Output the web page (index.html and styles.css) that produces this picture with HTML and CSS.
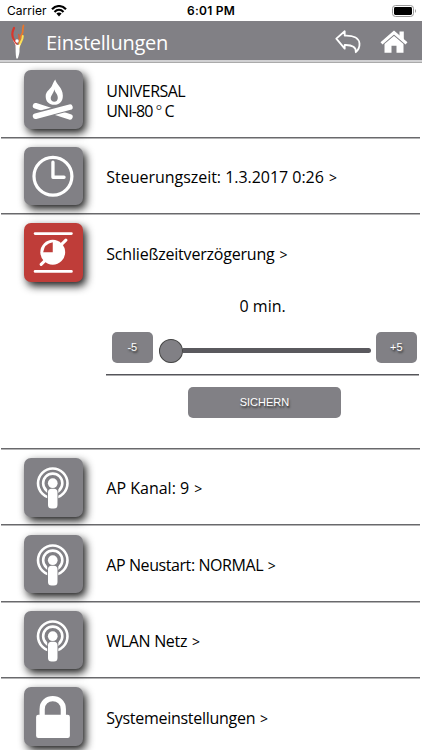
FILE: index.html
```html
<!DOCTYPE html>
<html lang="de">
<head>
<meta charset="utf-8">
<title>Einstellungen</title>
<link rel="stylesheet" href="styles.css">
</head>
<body>
<svg class="defs" aria-hidden="true">
  <symbol id="antenna" viewBox="0 0 58 58">
    <circle cx="28.500" cy="25" r="14.600" fill="none" stroke="#fff" stroke-width="2.600"/>
    <circle cx="28.500" cy="25" r="9.500" fill="none" stroke="#fff" stroke-width="2.600"/>
    <path d="M23 30h11v21H23z" fill="#818085"/>
    <circle cx="28.500" cy="25" r="4.800" fill="#fff"/>
    <rect x="23.800" y="30.500" width="9.400" height="19.500" rx="3.500" fill="#fff"/>
  </symbol>
</svg>
<div class="status">
  <span class="carrier">Carrier</span>
  <svg class="wifi" viewBox="0 0 16 12"><path d="M1 4.300C5-.1 11-.1 15 4.300M3.500 6.900c2.700-2.800 6.300-2.800 9 0" fill="none" stroke="#000" stroke-width="2.100"/><path d="M5.400 8.600Q8 6.600 10.600 8.600L8 11.400z"/></svg>
  <span class="clock">6:01 PM</span>
  <svg class="battery" viewBox="0 0 25 12"><rect x=".5" y=".5" width="21" height="11" rx="3" fill="#fff" stroke="#999"/><rect x="2" y="2" width="18" height="8" rx="1.400"/><path d="M23 4q2 2 0 4z" fill="#999"/></svg>
</div>
<header>
  <svg class="logo" viewBox="0 0 16 38">
    <path d="M4 7C2 11 1.500 15 4 19l2.500 5" fill="none" stroke="#d9362b" stroke-width="2.200" stroke-linecap="round"/>
    <path d="M13.500 4.500c-1.500 4 .5 6-2 9.500-2 3-1.500 5-2.500 8" fill="none" stroke="#e9752b" stroke-width="1.800" stroke-linecap="round"/>
    <path d="M8.500 13c1 2 1 3 .5 5" fill="none" stroke="#e5562c" stroke-width="1.200"/>
    <path d="M12.800 15c0 5-3 6-4.300 12" fill="none" stroke="#ffe153" stroke-width="2" stroke-linecap="round"/>
    <path d="M2.500 18c1 3 2.500 4 3 6.500.2 4 0 9 .8 13h1.500c1-3 2-6 1.700-9-.2-3 .3-4 1.300-6-1.500 1-2 1.500-3 1.500-2-.500-3-2-5.300-6z" fill="#fff"/>
    <circle cx="7" cy="20" r="1.700" fill="#fff"/>
  </svg>
  <h1>Einstellungen</h1>
  <svg class="back" viewBox="0 0 26 24"><path d="M1.300 8.600 9.700 1.300v4.300C18 5.200 24 8 24.500 13.500c.2 3.200-.8 6-3.700 8.700.7-4.700-3.300-7.500-11.100-7.200v3.700z" fill="none" stroke="#fff" stroke-width="1.800" stroke-linejoin="round"/></svg>
  <svg class="home" viewBox="0 0 28 24"><path d="M19.500 1.500h4.300v9l-4.300-4z" fill="#fff"/><path d="M1.500 13.300 14 2.500l12.500 10.800" fill="none" stroke="#fff" stroke-width="3"/><path d="m4.500 13.800 9.500-8 9.500 8v9h-7v-7h-5v7h-7z" fill="#fff"/><path d="m3.500 14.400 10.500-9 10.500 9" fill="none" stroke="#818085" stroke-width=".5"/></svg>
</header>
<main>
  <section class="row">
    <div class="tile"><svg viewBox="0 0 58 58"><path d="M31 9.500c1 5 7.500 8 7.500 16 0 6-3.500 9-8.500 9s-8.500-3-8.500-8.500c0-5 4-6.500 6-10 1.500-2.500 1.500-4 3.500-6.500z" fill="#fff"/><path d="M30 19c.5 3 4 5 3.500 9-.3 2.300-1.500 3.500-3.500 3.500s-3.500-1.500-3.500-3.500c0-3 3-5 3.500-9z" fill="#818085"/><path d="m11.500 35.500 34 11" stroke="#fff" stroke-width="5.600" stroke-linecap="round"/><path d="m11.500 45.500 34-9" stroke="#818085" stroke-width="8"/><path d="m11.500 45.800 34-9" stroke="#fff" stroke-width="5.600" stroke-linecap="round"/></svg></div>
    <div class="label double"><span class="t-universal">UNIVERSAL</span><br><span class="t-uni">UNI-80<span class="degree">°</span>C</span></div>
  </section>
  <section class="row">
    <div class="tile"><svg viewBox="0 0 58 58"><circle cx="28.700" cy="29" r="18.800" fill="none" stroke="#fff" stroke-width="3.200"/><path d="M28.700 15v15h11" fill="none" stroke="#fff" stroke-width="3.300" stroke-linecap="round" stroke-linejoin="round"/></svg></div>
    <div class="label"><span class="t-time">Steuerungszeit: 1.3.2017 0:26 <b>&gt;</b></span></div>
  </section>
  <section class="row delay">
    <div class="tile red"><svg viewBox="0 0 58 58"><path d="M11 10.500h36M11 48h36" stroke="#fff" stroke-width="2.800" stroke-linecap="round"/><path d="m17 41 24.500-24" stroke="#fff" stroke-width="3" stroke-linecap="round"/><circle cx="28.500" cy="29" r="12.300" fill="#fff"/><path d="M28.500 19v10H19q1-8.500 9.500-10z" fill="#bf3d39"/></svg></div>
    <div class="label"><span class="t-delay">Schließzeitverzögerung <b>&gt;</b></span></div>
    <div class="panel">
      <div class="value">0 min.</div>
      <div class="controls">
        <button>-5</button>
        <div class="slider"><i></i></div>
        <button>+5</button>
      </div>
      <button class="save">SICHERN</button>
    </div>
  </section>
  <section class="row">
    <div class="tile"><svg viewBox="0 0 58 58"><use href="#antenna"/></svg></div>
    <div class="label"><span class="t-kanal">AP Kanal: 9 <b>&gt;</b></span></div>
  </section>
  <section class="row">
    <div class="tile"><svg viewBox="0 0 58 58"><use href="#antenna"/></svg></div>
    <div class="label"><span class="t-restart">AP Neustart: NORMAL <b>&gt;</b></span></div>
  </section>
  <section class="row">
    <div class="tile"><svg viewBox="0 0 58 58"><use href="#antenna"/></svg></div>
    <div class="label"><span class="t-wlan">WLAN Netz <b>&gt;</b></span></div>
  </section>
  <section class="row">
    <div class="tile"><svg viewBox="0 0 58 58"><path d="M18 29v-7c0-14 21-14 21 0v7" fill="none" stroke="#fff" stroke-width="5.200"/><rect x="12" y="27.500" width="33.500" height="23" rx="2.200" fill="#fff"/></svg></div>
    <div class="label"><span class="t-system">Systemeinstellungen <b>&gt;</b></span></div>
  </section>
</main>
</body>
</html>
```
FILE: styles.css
```css
* { box-sizing: border-box; }
body { margin: 0; width: 422px; height: 750px; overflow: hidden; background: #fff; color: #000; font-family: "Open Sans", sans-serif; }
.defs { position: absolute; width: 0; height: 0; }
.status { height: 21px; display: grid; grid-template-columns: 43px 137px 60px 1fr 25px; align-items: center; padding: 0 5px 0 7px; font-family: Inter, sans-serif; font-size: 12px; white-space: nowrap; }
.wifi { width: 16px; height: 12px; margin-left: 1px; }
.clock { font-weight: 600; letter-spacing: .25px; }
.carrier { letter-spacing: .05px; }
.battery { grid-column: 5; width: 25px; height: 12px; }
header { height: 42px; background: linear-gradient(#818085 39px, #d1d1d3 39px, #d1d1d3 41px, #aaa 41px); display: flex; align-items: flex-start; padding-left: 10px; color: #fff; }
.logo { width: 16px; height: 38px; }
h1 { margin: 7px 0 0 20px; width: 289px; font-weight: 400; font-size: 20px; line-height: 30px; letter-spacing: -.25px; }
.back { width: 26px; height: 24px; margin-top: 9px; }
.home { width: 28px; height: 24px; margin: 9px 0 0 18.500px; }
.row { height: 76.400px; display: grid; grid-template-columns: 82px 1fr; align-content: start; padding: 8.300px 0 0 24.300px; background: linear-gradient(#69696c, #69696c) 1px calc(100% - .5px) / 419px 1.500px no-repeat; }
.row:first-child { height: 75.500px; padding-top: 7px; }
.tile { width: 58.500px; height: 58.500px; border-radius: 7px; background: #818085; box-shadow: 3px 4px 8px rgba(0,0,0,.9); }
.tile svg { display: block; width: 100%; height: 100%; }
.red { background: #bf3d39; }
.label { height: 60px; padding-top: 1.400px; display: flex; align-items: center; font-size: 16px; font-weight: 500; line-height: 20px; white-space: nowrap; }
.label b { font-size: 14px; font-weight: 500; letter-spacing: 0; margin-left: 1px; }
.double { display: block; padding-top: 10.500px; }
.degree { display: inline-block; width: 12px; text-align: center; font-weight: 300; }
.t-universal { letter-spacing: -.55px; }
.t-uni { letter-spacing: -.9px; }
.t-time { letter-spacing: -.03px; }
.t-delay { letter-spacing: -.2px; }
.t-kanal { letter-spacing: 0; }
.t-restart { letter-spacing: -.42px; }
.t-wlan { letter-spacing: -.32px; }
.t-system { letter-spacing: -.28px; }
.delay { height: 235px; grid-template-rows: 60px 158px; padding-top: 8.500px; }
.panel { grid-column: 2; }
.value { height: 48px; padding-top: 13px; padding-right: 3px; text-align: center; font-size: 16px; font-weight: 500; line-height: 20px; }
.controls { height: 44.500px; display: grid; grid-template-columns: 41px 213px 41px; column-gap: 5px; padding: .5px 0 0 5.500px; background: linear-gradient(#55555a, #55555a) 0 100% / 313px 1.500px no-repeat; }
button { appearance: none; border: 0; height: 31px; padding: 0; border-radius: 5px; background: #818085; color: #fff; font: 11px "Liberation Sans", sans-serif; text-shadow: 1px 2px 2px #333; }
.slider { height: 31px; margin-top: 3.500px; display: flex; align-items: center; padding-left: 1.300px; }
.slider::after { content: ""; height: 5px; width: 188px; background: #5a595e; border-radius: 0 3px 3px 0; }
.slider i { width: 24px; height: 24px; border-radius: 50%; background: #818085; border: 1px solid #444; }
.save { display: block; width: 153px; margin: 11px 0 0 81.700px; }
```
